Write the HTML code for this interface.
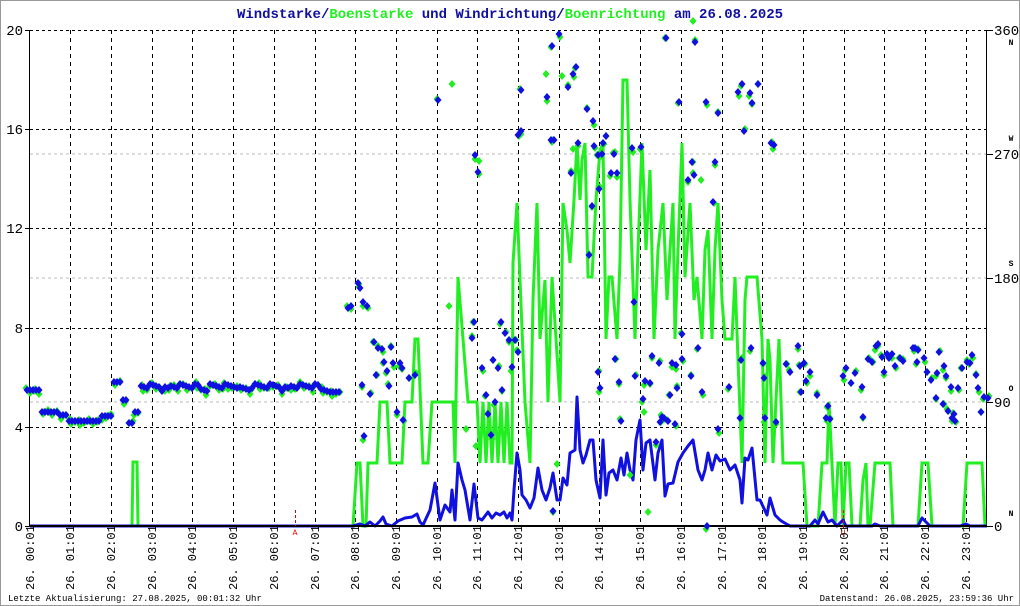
<!DOCTYPE html>
<html><head><meta charset="utf-8"><style>
html,body{margin:0;padding:0;background:#fff;}
svg{display:block;}
text{font-family:"Liberation Mono","DejaVu Sans Mono",monospace;}
</style></head><body>
<svg id="s" width="1020" height="606" viewBox="0 0 1020 606" xmlns="http://www.w3.org/2000/svg">
<rect x="0.5" y="0.5" width="1019" height="605" fill="#fff" stroke="#999"/>
<text x="510" y="18" text-anchor="middle" font-size="14" font-weight="bold" fill="#1010a0">Windstarke/<tspan fill="#22ee22">Boenstarke</tspan> und Windrichtung/<tspan fill="#22ee22">Boenrichtung</tspan> am 26.08.2025</text>
<g id="grid"></g>
<g id="data"></g>
<g id="lab"></g>
<text x="8" y="601" font-size="9" fill="#000">Letzte Aktualisierung: 27.08.2025, 00:01:32 Uhr</text>
<text x="1014" y="601" font-size="9" fill="#000" text-anchor="end">Datenstand: 26.08.2025, 23:59:36 Uhr</text>
</svg>
<script>
var NS="http://www.w3.org/2000/svg";
function el(p,t,a,txt){var e=document.createElementNS(NS,t);for(var k in a)e.setAttribute(k,a[k]);if(txt!==undefined)e.textContent=txt;document.getElementById(p).appendChild(e);return e;}
var L=30,R=987,T=30,B=526;
// grey direction lines
[154,278,402].forEach(function(y){el("grid","line",{x1:L,x2:R,y1:y,y2:y,stroke:"#bbb","stroke-dasharray":"3,3"});});
// horizontal value lines
[30,129,228,328,427].forEach(function(y){el("grid","line",{x1:L,x2:R,y1:y+.5,y2:y+.5,stroke:"#000","stroke-dasharray":"3,3"});});
// vertical hour lines
for(var h=1;h<24;h++){var x=Math.round(29.6+40.7*h)+.5;el("grid","line",{x1:x,x2:x,y1:T,y2:B,stroke:"#000","stroke-dasharray":"4,4"});}
// axes
el("grid","line",{x1:29.5,x2:29.5,y1:T,y2:B+1,stroke:"#000"});
el("grid","line",{x1:986.5,x2:986.5,y1:T,y2:B+1,stroke:"#000"});
[[30,"20"],[129,"16"],[228,"12"],[328,"8"],[427,"4"],[526,"0"]].forEach(function(a){
 el("grid","line",{x1:25,x2:30,y1:a[0]+.5,y2:a[0]+.5,stroke:"#000"});
 el("lab","text",{x:23,y:a[0]+5,"font-size":"14","text-anchor":"end",fill:"#000"},a[1]);});
[[30,"360"],[154,"270"],[278,"180"],[402,"90"],[526,"0"]].forEach(function(a){
 el("grid","line",{x1:986,x2:993,y1:a[0]+.5,y2:a[0]+.5,stroke:"#000"});
 el("lab","text",{x:994,y:a[0]+5,"font-size":"14",fill:"#000"},a[1]);});
[[45,"N"],[141,"W"],[266,"S"],[391,"O"],[516,"N"]].forEach(function(a){
 el("lab","text",{x:1011,y:a[0],"font-size":"8","font-weight":"bold","text-anchor":"middle",fill:"#000"},a[1]);});
// hour labels
for(var h=0;h<24;h++){var x=Math.round(29.6+40.7*h)+4;var hh=(h<10?"0":"")+h;
 el("lab","text",{x:0,y:0,"font-size":"12",fill:"#000",transform:"translate("+x+",590) rotate(-90)"},"26. "+hh+":01");}
// green gust line
var g=[[30,526],[132,526],[133,462],[137,462],[138,526],[353,526],[357,463],[360,463],[363,526],[366,526],[368,463],[377,463],[380,402],[387,402],[390,463],[402,463],[405,402],[412,402],[415,339],[418,339],[423,463],[428,463],[432,402],[453,402],[455,463],[458,277],[463,339],[468,402],[477,402],[480,463],[483,402],[486,463],[489,402],[492,463],[495,402],[498,463],[501,402],[504,463],[507,402],[510,463],[512,463],[513,263],[517,203],[520,280],[525,402],[530,463],[533,300],[537,203],[540,339],[545,280],[548,402],[552,277],[556,339],[560,402],[563,203],[567,230],[570,263],[574,200],[577,143],[580,200],[582,160],[585,143],[588,277],[592,277],[596,200],[600,150],[603,143],[606,339],[609,277],[612,277],[617,339],[620,260],[623,80],[627,80],[630,200],[635,339],[638,250],[642,143],[646,250],[650,170],[654,339],[658,250],[663,203],[667,300],[670,250],[673,203],[675,339],[678,250],[682,143],[685,277],[690,203],[694,300],[697,277],[702,339],[705,250],[708,230],[712,339],[715,250],[718,203],[722,300],[725,339],[732,339],[735,277],[738,360],[742,463],[745,300],[747,277],[757,277],[762,339],[765,463],[768,339],[770,360],[773,463],[776,400],[779,339],[783,463],[788,463],[803,463],[807,526],[818,526],[822,463],[827,463],[829,402],[835,526],[838,463],[841,463],[843,526],[846,463],[849,463],[852,526],[857,526],[860,526],[863,480],[866,463],[868,526],[870,526],[875,463],[890,463],[893,526],[918,526],[922,463],[928,463],[932,526],[963,526],[967,463],[982,463],[985,526]];
el("data","polyline",{points:g.join(" "),fill:"none",stroke:"#22ee22","stroke-width":"3","stroke-linejoin":"miter"});
// blue wind line
var b=[[30,526],[353,526],[360,524],[365,526],[370,522],[375,526],[380,521],[383,517],[386,524],[392,526],[398,521],[405,518],[412,517],[417,514],[420,522],[423,525],[430,510],[435,483],[440,520],[445,505],[450,512],[452,490],[455,520],[458,463],[462,480],[465,490],[470,520],[474,484],[478,518],[482,520],[488,512],[492,518],[496,513],[500,515],[504,512],[507,518],[510,513],[512,520],[514,490],[517,453],[520,470],[522,495],[526,500],[530,508],[534,498],[538,468],[542,490],[546,500],[550,488],[553,473],[557,500],[560,500],[563,478],[567,485],[570,453],[575,450],[577,397],[580,450],[583,463],[586,455],[590,440],[593,440],[596,480],[600,498],[603,440],[606,495],[609,473],[613,470],[617,480],[621,458],[624,475],[627,453],[630,470],[633,480],[636,440],[640,420],[643,470],[646,443],[650,440],[655,480],[658,453],[662,440],[665,496],[668,484],[673,483],[678,462],[683,453],[688,446],[693,440],[698,470],[702,480],[705,470],[708,453],[712,470],[716,455],[720,461],[725,459],[730,470],[735,465],[740,480],[742,503],[745,458],[748,460],[752,448],[757,500],[760,500],[767,515],[770,498],[775,515],[780,520],[783,522],[790,526],[800,526],[803,526],[810,526],[815,520],[818,524],[823,512],[828,522],[832,520],[837,526],[843,520],[846,526],[850,526],[860,526],[872,526],[875,524],[880,526],[890,526],[918,526],[922,518],[926,522],[930,526],[960,526],[966,524],[970,526],[987,526]];
el("data","polyline",{points:b.join(" "),fill:"none",stroke:"#1010e0","stroke-width":"3","stroke-linejoin":"round"});
el("data","line",{x1:30,x2:987,y1:526,y2:526,stroke:"#000","stroke-width":"2"});
// red markers
el("data","line",{x1:295.5,x2:295.5,y1:510,y2:526,stroke:"#e00","stroke-dasharray":"3,2"});
el("data","text",{x:295,y:535,"font-size":"8","text-anchor":"middle",fill:"#e00"},"A");
el("data","line",{x1:843.5,x2:843.5,y1:510,y2:530,stroke:"#e00","stroke-dasharray":"3,2"});
el("data","text",{x:843,y:535,"font-size":"8","text-anchor":"middle",fill:"#e00"},"U");
// diamonds
function dia(x,y,c){el("data","polygon",{points:(x)+","+(y-4)+" "+(x+3.5)+","+y+" "+x+","+(y+4)+" "+(x-3.5)+","+y,fill:c});}
var pts=[];
function early(x){if(x<40)return 390;if(x<60)return 412;if(x<68)return 415;if(x<100)return 421;if(x<112)return 416;if(x<122)return 382;if(x<128)return 400;if(x<135)return 423;if(x<140)return 412;if(x<330)return 386+((x*7)%5)-2+((x%40)<10?3:0);if(x<340)return 392;return 370;}
for(var x=27;x<342;x+=3){pts.push([x,early(x)]);}
var later=[[348,308],[351,306],[358,283],[360,288],[363,302],[367,306],[374,342],[378,348],[382,349],[384,362],[391,347],[393,363],[387,371],[409,378],[415,375],[400,363],[402,368],[370,394],[364,436],[362,385],[376,375],[389,386],[397,412],[403,420],[438,100],[475,155],[478,172],[474,322],[472,338],[482,368],[486,395],[488,414],[491,435],[501,322],[493,360],[498,368],[495,402],[502,390],[505,333],[512,367],[509,340],[515,340],[518,352],[521,131],[518,135],[521,90],[547,97],[551,140],[554,140],[568,87],[573,74],[576,67],[587,109],[593,121],[602,154],[606,136],[599,189],[611,173],[592,206],[598,372],[600,388],[619,382],[615,359],[621,421],[578,143],[603,143],[614,154],[617,173],[594,146],[598,155],[571,173],[559,34],[552,46],[589,255],[632,148],[641,147],[634,302],[659,363],[643,399],[650,383],[635,376],[645,381],[652,356],[660,422],[662,417],[656,442],[664,418],[668,421],[676,365],[682,359],[666,38],[695,42],[706,102],[679,102],[718,113],[738,92],[742,84],[758,84],[744,131],[750,93],[752,103],[771,143],[774,145],[688,180],[692,162],[694,175],[715,162],[713,202],[682,334],[672,363],[675,424],[670,395],[677,388],[702,392],[698,348],[691,376],[718,429],[729,387],[740,418],[741,360],[751,348],[763,363],[764,378],[765,418],[776,422],[786,364],[790,372],[798,346],[804,363],[800,366],[810,372],[806,381],[801,392],[817,395],[826,418],[828,406],[830,419],[843,376],[846,368],[851,383],[855,373],[862,387],[863,417],[868,359],[876,346],[878,344],[872,362],[882,357],[884,372],[887,354],[889,358],[892,354],[895,366],[900,358],[903,361],[913,348],[915,348],[918,350],[924,358],[917,362],[927,372],[931,380],[937,373],[936,398],[939,352],[944,366],[946,376],[943,404],[948,411],[952,418],[955,421],[954,414],[951,387],[958,388],[962,368],[967,362],[972,355],[970,363],[976,375],[978,388],[984,397],[981,412],[988,398],[707,526],[553,511]];
pts=pts.concat(later);
var gonly=[[452,84],[479,161],[449,306],[466,429],[476,446],[546,74],[562,76],[573,149],[615,152],[644,412],[693,21],[701,180],[557,464],[648,512],[630,475]];
pts.forEach(function(p,i){dia(p[0]+(i%3-1),p[1]+((i*5)%7)-2,"#22ee22");});
gonly.forEach(function(p){dia(p[0],p[1],"#22ee22");});
pts.forEach(function(p){dia(p[0],p[1],"#1010e0");});
</script>
</body></html>
